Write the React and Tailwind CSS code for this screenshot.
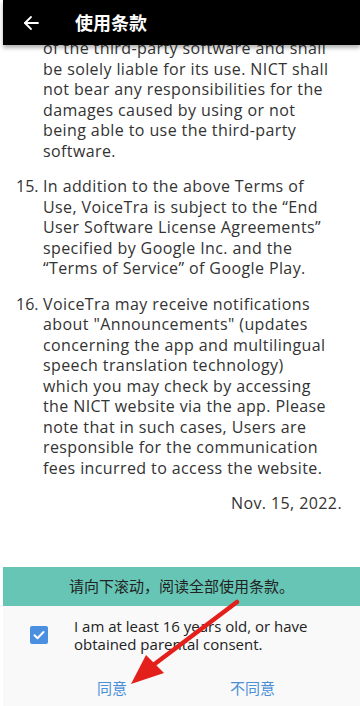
import React from 'react';

// lines are kept as in the app so the wraps match
const items = [
    {
        num: '',
        lines: [
            'of the third-party software and shall',
            'be solely liable for its use. NICT shall',
            'not bear any responsibilities for the',
            'damages caused by using or not',
            'being able to use the third-party',
            'software.',
        ],
    },
    {
        num: '15.',
        lines: [
            'In addition to the above Terms of',
            'Use, VoiceTra is subject to the \u201cEnd',
            'User Software License Agreements\u201d',
            'specified by Google Inc. and the',
            '\u201cTerms of Service\u201d of Google Play.',
        ],
    },
    {
        num: '16.',
        lines: [
            'VoiceTra may receive notifications',
            'about "Announcements" (updates',
            'concerning the app and multilingual',
            'speech translation technology)',
            'which you may check by accessing',
            'the NICT website via the app. Please',
            'note that in such cases, Users are',
            'responsible for the communication',
            'fees incurred to access the website.',
        ],
    },
];

const sans = { fontFamily: '"Open Sans", "Noto Sans CJK SC", sans-serif' };
const cjk = { fontFamily: '"Noto Sans CJK SC", "Noto Sans", sans-serif' };

const App = () => {
    return (
        <div className="relative w-[360px] h-[706px] overflow-hidden bg-white pl-[3px] flex flex-col" style={sans}>
            {/* header */}
            <div className="relative z-10 h-[45px] shrink-0 bg-black flex items-center shadow-[0_3px_4px_rgba(0,0,0,0.3)]">
                <svg className="ml-[20px]" width="16" height="16" viewBox="0 0 16 16" fill="none" stroke="white" strokeWidth="1.8" strokeLinecap="round" strokeLinejoin="round">
                    <path d="M15 8H2" />
                    <path d="M8 2L2 8l6 6" />
                </svg>
                <span className="ml-[36px] text-white text-[18px] font-bold" style={cjk}>使用条款</span>
            </div>

            {/* terms body */}
            <div className="flex-1 overflow-hidden">
                <div className="-mt-[7px] pl-[13px] text-[16px] leading-[20.5px] text-[#333] tracking-[0.4px]">
                    {items.map((item, i) => (
                        <div key={i} className="flex mb-[15px]">
                            <span className="w-[27px] shrink-0 tracking-normal">{item.num}</span>
                            <p className="flex-1 whitespace-nowrap">
                                {item.lines.map((line, j) => (
                                    <span key={j} className="block">{line}</span>
                                ))}
                            </p>
                        </div>
                    ))}
                    <p className="text-right pr-[18px]">Nov. 15, 2022.</p>
                </div>
            </div>

            {/* scroll notice */}
            <div className="h-[39px] shrink-0 bg-[#66c5b4] flex items-center justify-center text-[15px] text-[#222]" style={cjk}>
                请向下滚动，阅读全部使用条款。
            </div>

            {/* consent panel */}
            <div className="h-[100px] shrink-0 bg-[#f9f9f9]">
                <div className="flex items-center pt-[11px] pl-[27px]">
                    <div className="w-[18px] h-[18px] shrink-0 rounded-[2px] bg-[#4a8fe0] flex items-center justify-center">
                        <svg width="14" height="14" viewBox="0 0 14 14" fill="none" stroke="white" strokeWidth="2" strokeLinecap="round" strokeLinejoin="round">
                            <path d="M2.5 7.2l3 3 6-6.2" />
                        </svg>
                    </div>
                    <p className="ml-[26px] text-[15px] leading-[18px] text-[#222] whitespace-nowrap">
                        <span className="block">I am at least 16 years old, or have</span>
                        <span className="block">obtained parental consent.</span>
                    </p>
                </div>
                <div className="flex pl-[94px] pt-[24px] text-[15px] text-[#4a8fd8]" style={cjk}>
                    <span>同意</span>
                    <span className="ml-[103px]">不同意</span>
                </div>
            </div>

            {/* red annotation arrow */}
            <svg className="absolute left-0 top-0 pointer-events-none" width="360" height="706" viewBox="0 0 360 706">
                <line x1="237" y1="602" x2="152" y2="666" stroke="#e3201b" strokeWidth="4.5" strokeLinecap="round" />
                <polygon points="131,684 146,655 164,673" fill="#e3201b" />
            </svg>
        </div>
    );
};

export default App;
